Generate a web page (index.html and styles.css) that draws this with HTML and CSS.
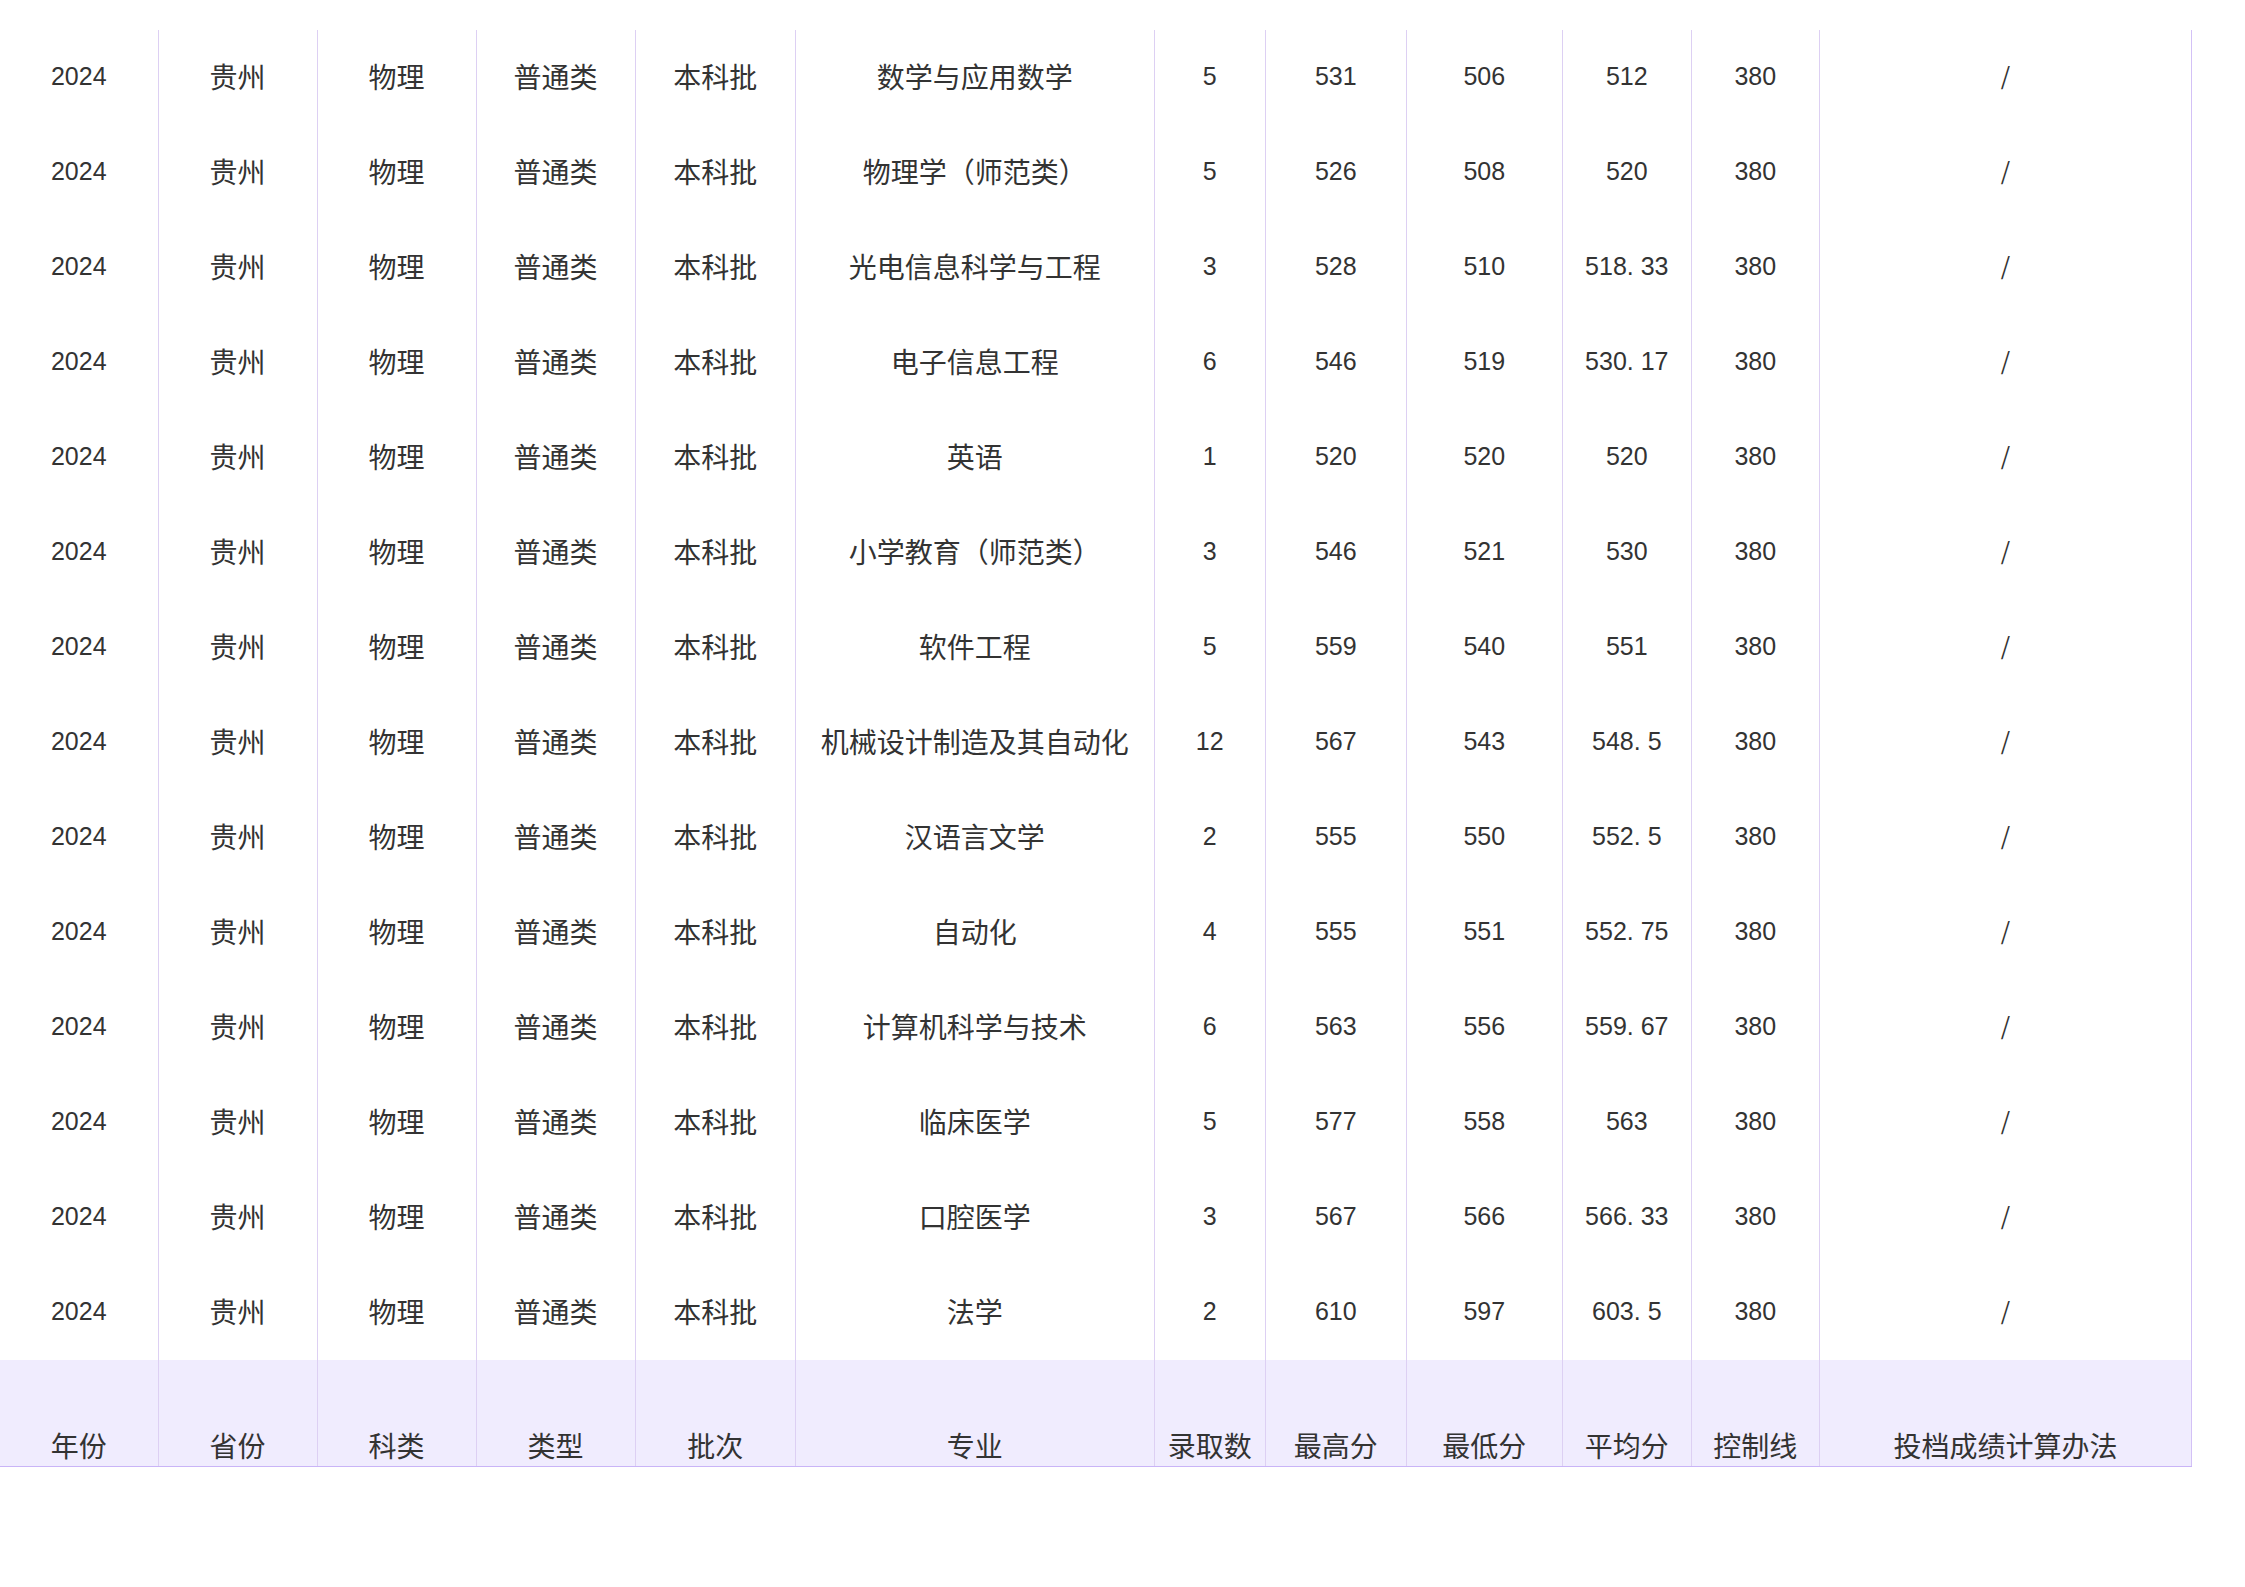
FILE: index.html
```html
<!DOCTYPE html>
<html lang="zh-CN">
<head>
<meta charset="utf-8">
<title>录取分数</title>
<link rel="stylesheet" href="styles.css">
</head>
<body>
<table class="score-table">
  <colgroup>
    <col class="w158"><col class="w159"><col class="w159"><col class="w159"><col class="w160"><col class="w359"><col class="w111"><col class="w141"><col class="w156"><col class="w129"><col class="w128"><col class="w372">
  </colgroup>
  <tbody>
    <tr><td class="num">2024</td><td>贵州</td><td>物理</td><td>普通类</td><td>本科批</td><td>数学与应用数学</td><td class="num">5</td><td class="num">531</td><td class="num">506</td><td class="num">512</td><td class="num">380</td><td class="slash">/</td></tr>
    <tr><td class="num">2024</td><td>贵州</td><td>物理</td><td>普通类</td><td>本科批</td><td>物理学（师范类）</td><td class="num">5</td><td class="num">526</td><td class="num">508</td><td class="num">520</td><td class="num">380</td><td class="slash">/</td></tr>
    <tr><td class="num">2024</td><td>贵州</td><td>物理</td><td>普通类</td><td>本科批</td><td>光电信息科学与工程</td><td class="num">3</td><td class="num">528</td><td class="num">510</td><td class="num">518. 33</td><td class="num">380</td><td class="slash">/</td></tr>
    <tr><td class="num">2024</td><td>贵州</td><td>物理</td><td>普通类</td><td>本科批</td><td>电子信息工程</td><td class="num">6</td><td class="num">546</td><td class="num">519</td><td class="num">530. 17</td><td class="num">380</td><td class="slash">/</td></tr>
    <tr><td class="num">2024</td><td>贵州</td><td>物理</td><td>普通类</td><td>本科批</td><td>英语</td><td class="num">1</td><td class="num">520</td><td class="num">520</td><td class="num">520</td><td class="num">380</td><td class="slash">/</td></tr>
    <tr><td class="num">2024</td><td>贵州</td><td>物理</td><td>普通类</td><td>本科批</td><td>小学教育（师范类）</td><td class="num">3</td><td class="num">546</td><td class="num">521</td><td class="num">530</td><td class="num">380</td><td class="slash">/</td></tr>
    <tr><td class="num">2024</td><td>贵州</td><td>物理</td><td>普通类</td><td>本科批</td><td>软件工程</td><td class="num">5</td><td class="num">559</td><td class="num">540</td><td class="num">551</td><td class="num">380</td><td class="slash">/</td></tr>
    <tr><td class="num">2024</td><td>贵州</td><td>物理</td><td>普通类</td><td>本科批</td><td>机械设计制造及其自动化</td><td class="num">12</td><td class="num">567</td><td class="num">543</td><td class="num">548. 5</td><td class="num">380</td><td class="slash">/</td></tr>
    <tr><td class="num">2024</td><td>贵州</td><td>物理</td><td>普通类</td><td>本科批</td><td>汉语言文学</td><td class="num">2</td><td class="num">555</td><td class="num">550</td><td class="num">552. 5</td><td class="num">380</td><td class="slash">/</td></tr>
    <tr><td class="num">2024</td><td>贵州</td><td>物理</td><td>普通类</td><td>本科批</td><td>自动化</td><td class="num">4</td><td class="num">555</td><td class="num">551</td><td class="num">552. 75</td><td class="num">380</td><td class="slash">/</td></tr>
    <tr><td class="num">2024</td><td>贵州</td><td>物理</td><td>普通类</td><td>本科批</td><td>计算机科学与技术</td><td class="num">6</td><td class="num">563</td><td class="num">556</td><td class="num">559. 67</td><td class="num">380</td><td class="slash">/</td></tr>
    <tr><td class="num">2024</td><td>贵州</td><td>物理</td><td>普通类</td><td>本科批</td><td>临床医学</td><td class="num">5</td><td class="num">577</td><td class="num">558</td><td class="num">563</td><td class="num">380</td><td class="slash">/</td></tr>
    <tr><td class="num">2024</td><td>贵州</td><td>物理</td><td>普通类</td><td>本科批</td><td>口腔医学</td><td class="num">3</td><td class="num">567</td><td class="num">566</td><td class="num">566. 33</td><td class="num">380</td><td class="slash">/</td></tr>
    <tr><td class="num">2024</td><td>贵州</td><td>物理</td><td>普通类</td><td>本科批</td><td>法学</td><td class="num">2</td><td class="num">610</td><td class="num">597</td><td class="num">603. 5</td><td class="num">380</td><td class="slash">/</td></tr>
  </tbody>
  <tfoot>
    <tr class="head-row"><th>年份</th><th>省份</th><th>科类</th><th>类型</th><th>批次</th><th>专业</th><th>录取数</th><th>最高分</th><th>最低分</th><th>平均分</th><th>控制线</th><th>投档成绩计算办法</th></tr>
  </tfoot>
</table>
</body>
</html>
```

FILE: styles.css
```css
html, body {
  margin: 0;
  padding: 0;
  background: #ffffff;
}

body {
  padding-top: 30px;
  font-family: "Noto Sans CJK SC", "Liberation Sans", sans-serif;
  color: #333333;
}

.score-table {
  border-collapse: collapse;
  table-layout: fixed;
  width: 2192px;
}

.w158 { width: 158px; }
.w159 { width: 159px; }
.w160 { width: 160px; }
.w359 { width: 359px; }
.w111 { width: 111px; }
.w141 { width: 141px; }
.w156 { width: 156px; }
.w129 { width: 129px; }
.w128 { width: 128px; }
.w372 { width: 372px; }

.score-table td,
.score-table th {
  padding: 0;
  text-align: center;
  font-size: 28px;
  font-weight: 400;
  line-height: 40px;
  border-left: 1px solid #ddd0f3;
  white-space: nowrap;
  color: #333333;
}

.score-table tr > :first-child {
  border-left: none;
}

.score-table tr > :last-child {
  border-right: 1px solid #d3c1f6;
}

.score-table td {
  height: 95px;
  box-sizing: border-box;
  padding-bottom: 3px;
  vertical-align: middle;
}

.score-table td.num {
  font-family: "Liberation Sans", "Noto Sans CJK SC", sans-serif;
  font-size: 25px;
}

.score-table td.slash {
  font-family: "Noto Sans CJK SC", sans-serif;
  font-size: 24px;
  font-weight: 400;
  color: #333333;
  padding-bottom: 5px;
}

.head-row th {
  height: 106px;
  box-sizing: border-box;
  vertical-align: bottom;
  background: #f0ecfe;
  border-bottom: 1px solid #c9b4f7;
  padding-bottom: 1px;
}
```
